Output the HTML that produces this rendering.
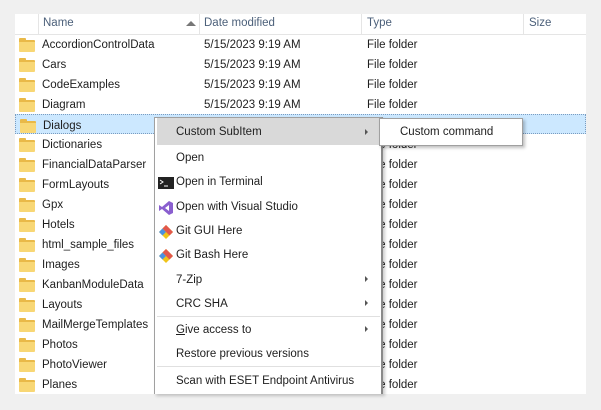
<!DOCTYPE html>
<html><head><style>
*{margin:0;padding:0;box-sizing:border-box}
body{width:601px;height:410px;background:#f0f0f0;font-family:"Liberation Sans",sans-serif;font-size:11.5px;color:#1e1e1e;position:relative;overflow:hidden}
.panel{position:absolute;left:15px;top:14px;width:571px;height:380px;background:#fff;overflow:hidden}
.hdr{position:absolute;left:0;top:0;width:571px;height:21px;border-bottom:1px solid #e5e5e5;color:#4c607a}
.hdr span{position:absolute;top:3px}
.vd{position:absolute;top:0;width:1px;height:20px;background:#e5e5e5}
.row{position:absolute;left:0;width:571px;height:20px}
.row span{position:absolute;top:5px}
.fold{position:absolute;left:4px;top:6px;width:16px;height:12px;background:#f8d775;border-top:2px solid #e9b948;border-radius:1px}
.fold:before{content:"";position:absolute;left:0;top:-4px;width:7px;height:3px;background:#e9b948;border-radius:1px 1px 0 0}
.sel{background:#cce8ff;border:1px dotted #7a9cc0}
.menu{position:absolute;left:154px;top:117px;width:229px;height:277px;background:#fff;border:1px solid #a0a0a0;border-bottom:none;border-right:2px solid #8a8a8a;box-shadow:2px 2px 3px rgba(0,0,0,.2)}
.mi{position:absolute;left:2px;width:223px;height:24px}
.mi span{position:absolute;left:19px;top:6px}
.mi .ar{position:absolute;left:208px;top:8px;width:0;height:0;border-left:3px solid #555;border-top:3px solid transparent;border-bottom:3px solid transparent}
.sep{position:absolute;left:2px;width:223px;height:1px;background:#e0e0e0}
.ic{position:absolute;left:1px;top:5px;width:16px;height:16px}
.sub{position:absolute;left:379px;top:118px;width:144px;height:28px;background:#fff;border:1px solid #a0a0a0;box-shadow:2px 2px 3px rgba(0,0,0,.25)}
.sub span{position:absolute;left:20px;top:7px}
</style></head><body>
<div class="panel">
<div class="hdr">
<div class="vd" style="left:23px"></div>
<span style="left:28px">Name</span>
<div style="position:absolute;left:171px;top:7px;border-left:5px solid transparent;border-right:5px solid transparent;border-bottom:5px solid #777"></div>
<div class="vd" style="left:184px"></div>
<span style="left:189px">Date modified</span>
<div class="vd" style="left:346px"></div>
<span style="left:352px">Type</span>
<div class="vd" style="left:508px"></div>
<span style="left:514px">Size</span>
</div>
<div id="rows"></div>
</div>
<div class="menu">
<div class="mi" style="top:0;height:27px;background:#d9d9d9"><span style="top:8px">Custom SubItem</span><i class="ar" style="top:11px"></i></div>
<div class="mi" style="top:28px"><span>Open</span></div>
<div class="mi" style="top:52px"><svg class="ic" viewBox="0 0 16 16"><rect x="0" y="2" width="16" height="12" fill="#222"/><path d="M2 5l3 2-3 2" stroke="#fff" fill="none"/><path d="M6 11h4" stroke="#fff"/></svg><span>Open in Terminal</span></div>
<div class="mi" style="top:77px"><svg class="ic" viewBox="0 0 16 16"><path d="M11 1l4 2v10l-4 2-7-6-3 2V5l3 2z M11 5L7 8l4 3z" fill="#8a5fcf" fill-rule="evenodd"/></svg><span>Open with Visual Studio</span></div>
<div class="mi" style="top:101px"><svg class="ic" viewBox="0 0 16 16"><path d="M8 1l7 7-7 7-7-7z" fill="#f0c419"/><path d="M8 1l7 7-3.5 3.5L4.5 4.5z" fill="#e2574c"/><path d="M1 8l3.5-3.5 3.5 3.5-3.5 3.5z" fill="#4a90e2"/></svg><span>Git GUI Here</span></div>
<div class="mi" style="top:125px"><svg class="ic" viewBox="0 0 16 16"><path d="M8 1l7 7-7 7-7-7z" fill="#f0c419"/><path d="M8 1l7 7-3.5 3.5L4.5 4.5z" fill="#e2574c"/><path d="M1 8l3.5-3.5 3.5 3.5-3.5 3.5z" fill="#4a90e2"/></svg><span>Git Bash Here</span></div>
<div class="mi" style="top:150px"><span>7-Zip</span><i class="ar"></i></div>
<div class="mi" style="top:174px"><span>CRC SHA</span><i class="ar"></i></div>
<div class="sep" style="top:198px"></div>
<div class="mi" style="top:200px"><span><u>G</u>ive access to</span><i class="ar"></i></div>
<div class="mi" style="top:224px"><span>Restore previous versions</span></div>
<div class="sep" style="top:248px"></div>
<div class="mi" style="top:251px"><span>Scan with ESET Endpoint Antivirus</span></div>
</div>
<div class="sub"><span>Custom command</span></div>
<script>
var n=["AccordionControlData","Cars","CodeExamples","Diagram","Dialogs","Dictionaries","FinancialDataParser","FormLayouts","Gpx","Hotels","html_sample_files","Images","KanbanModuleData","Layouts","MailMergeTemplates","Photos","PhotoViewer","Planes"];
var h="";n.forEach(function(t,i){var y=20+i*20;h+='<div class="row'+(i==4?' sel':'')+'" style="top:'+y+'px"><i class="fold"></i><span style="left:27px">'+t+'</span>'+(i<4?'<span style="left:189px">5/15/2023 9:19 AM</span><span style="left:352px">File folder</span>':'<span style="left:352px">File folder</span>')+'</div>';});
document.getElementById("rows").innerHTML=h;
</script>
</body></html>
